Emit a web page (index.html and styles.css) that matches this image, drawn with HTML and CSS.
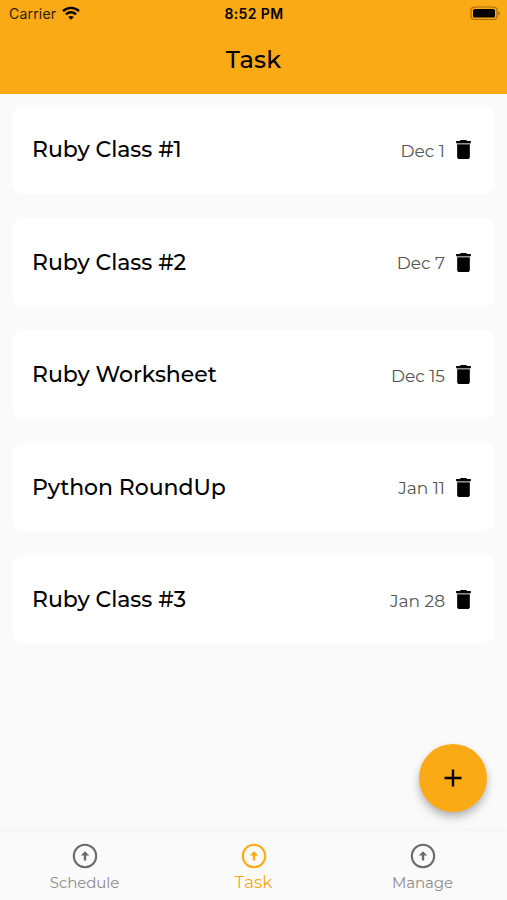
FILE: index.html
```html
<!DOCTYPE html>
<html lang="en">
<head>
    <meta charset="UTF-8">
    <meta name="viewport" content="width=device-width, initial-scale=1.0">
    <title>Task</title>
    <link rel="stylesheet" href="styles.css">
</head>
<body>
    <svg class="symbols" width="0" height="0">
        <symbol id="trash" viewBox="5 3 14 18">
            <path d="M6 19c0 1.1.9 2 2 2h8c1.1 0 2-.9 2-2V7H6v12zM19 4h-3.5l-1-1h-5l-1 1H5v2h14V4z"/>
            <path d="M6 6h12v1H6z" fill="#888"/>
        </symbol>
        <symbol id="arrow-circle" viewBox="0 0 26 26">
            <circle cx="13" cy="13" r="11.2" fill="none" stroke="currentColor" stroke-width="2.1"/>
            <path d="M13 8.2 L17.2 12.4 H14.2 V17.6 H11.8 V12.4 H8.8 Z" fill="currentColor"/>
        </symbol>
    </svg>
    <div class="app">
        <header class="header">
            <div class="status-bar">
                <div class="carrier">
                    <span class="carrier-name">Carrier</span>
                    <svg class="wifi" viewBox="0 0 18 14" fill="none" stroke="#000" stroke-width="2.4">
                        <path d="M1 5.2C5.5.7 12.5.7 17 5.2"/>
                        <path d="M4 8.3c2.8-2.8 7.2-2.8 10 0"/>
                        <path d="M9 13.8 6.2 11c1.6-1.5 4-1.5 5.6 0z" fill="#000" stroke="none"/>
                    </svg>
                </div>
                <span class="time">8:52 PM</span>
                <svg class="battery" viewBox="0 0 31 15">
                    <rect x="1" y="1" width="26" height="12.5" rx="3.5" fill="none" stroke="#a86f0c" stroke-width="1.2"/>
                    <rect x="3" y="3" width="22" height="8.5" rx="1.5"/>
                    <path d="M28.4 5c2 .8 2 3.7 0 4.5z" fill="#a86f0c"/>
                </svg>
            </div>
            <h1 class="title">Task</h1>
        </header>

        <main class="task-list">
            <div class="task">
                <span class="name">Ruby Class #1</span>
                <span class="date">Dec 1</span>
                <svg class="trash"><use href="#trash"/></svg>
            </div>
            <div class="task">
                <span class="name">Ruby Class #2</span>
                <span class="date">Dec 7</span>
                <svg class="trash"><use href="#trash"/></svg>
            </div>
            <div class="task">
                <span class="name">Ruby Worksheet</span>
                <span class="date">Dec 15</span>
                <svg class="trash"><use href="#trash"/></svg>
            </div>
            <div class="task">
                <span class="name">Python RoundUp</span>
                <span class="date">Jan 11</span>
                <svg class="trash"><use href="#trash"/></svg>
            </div>
            <div class="task">
                <span class="name">Ruby Class #3</span>
                <span class="date">Jan 28</span>
                <svg class="trash"><use href="#trash"/></svg>
            </div>
        </main>

        <button class="add-button" type="button" aria-label="Add task">
            <svg width="18" height="18" viewBox="0 0 18 18"><path d="M9 .5v17M.5 9h17" stroke="#000" stroke-width="2.4"/></svg>
        </button>

        <nav class="tabs">
            <div class="tab">
                <svg class="tab-icon"><use href="#arrow-circle"/></svg>
                <span class="tab-label">Schedule</span>
            </div>
            <div class="tab active">
                <svg class="tab-icon"><use href="#arrow-circle"/></svg>
                <span class="tab-label">Task</span>
            </div>
            <div class="tab">
                <svg class="tab-icon"><use href="#arrow-circle"/></svg>
                <span class="tab-label">Manage</span>
            </div>
        </nav>
    </div>
</body>
</html>
```

FILE: styles.css
```css
* {
    box-sizing: border-box;
}
body {
    margin: 0;
    font-family: Montserrat, Inter, sans-serif;
    background-color: #fafafa;
    color: #000;
}
.symbols {
    position: absolute;
}
.app {
    position: relative;
    display: flex;
    flex-direction: column;
    height: 900px;
    overflow: hidden;
}
.header {
    height: 94px;
    background-color: #f9aa14;
}
.status-bar {
    display: grid;
    grid-template-columns: 1fr auto 1fr;
    align-items: center;
    height: 27px;
    padding: 0 6px 0 9px;
    font-family: Inter, sans-serif;
}
.carrier {
    display: flex;
    align-items: center;
    gap: 6px;
}
.carrier-name {
    font-size: 14px;
    letter-spacing: 0.2px;
    color: #2b1d03;
}
.wifi {
    width: 18px;
    height: 14px;
    margin-top: -1px;
}
.time {
    margin-left: -2px;
    font-size: 14px;
    font-weight: 600;
    letter-spacing: 0.4px;
}
.battery {
    justify-self: end;
    width: 31px;
    height: 15px;
}
.title {
    margin: 0;
    padding-top: 17px;
    text-align: center;
    font-size: 24px;
    line-height: 32px;
    font-weight: 500;
    letter-spacing: 0.2px;
}
.task-list {
    flex: 1;
    display: flex;
    flex-direction: column;
    gap: 23.5px;
    padding: 11px 12px 0;
}
.task {
    display: flex;
    align-items: center;
    height: 89px;
    padding: 0 24px 0 20px;
    border-radius: 12px;
    background-color: #fff;
}
.name {
    flex: 1;
    font-size: 22px;
    font-weight: 500;
    letter-spacing: -0.05px;
}
.date {
    margin-right: 11px;
    padding-top: 2px;
    font-size: 17px;
    color: #555;
}
.trash {
    width: 15px;
    height: 19px;
}
.add-button {
    position: absolute;
    right: 20px;
    bottom: 88px;
    display: flex;
    align-items: center;
    justify-content: center;
    width: 68px;
    height: 68px;
    padding: 0;
    border: none;
    border-radius: 50%;
    background-color: #f9aa14;
    box-shadow: 0 4px 7px rgba(0, 0, 0, 0.2), 0 7px 12px rgba(0, 0, 0, 0.1);
}
.tabs {
    display: flex;
    height: 69px;
    background-color: #fafafa;
    box-shadow: 0 -1px 3px rgba(0, 0, 0, 0.04);
}
.tab {
    flex: 1;
    display: flex;
    flex-direction: column;
    align-items: center;
    padding-top: 12px;
    color: #6b6b6b;
}
.tab-icon {
    width: 26px;
    height: 26px;
}
.tab-label {
    margin-top: 4px;
    font-size: 15px;
    line-height: 20px;
    letter-spacing: -0.1px;
    color: #8c8c8c;
}
.active,
.active .tab-label {
    color: #f9aa14;
}
.active .tab-label {
    margin-top: 3px;
    font-size: 17px;
    letter-spacing: 0;
}
```
